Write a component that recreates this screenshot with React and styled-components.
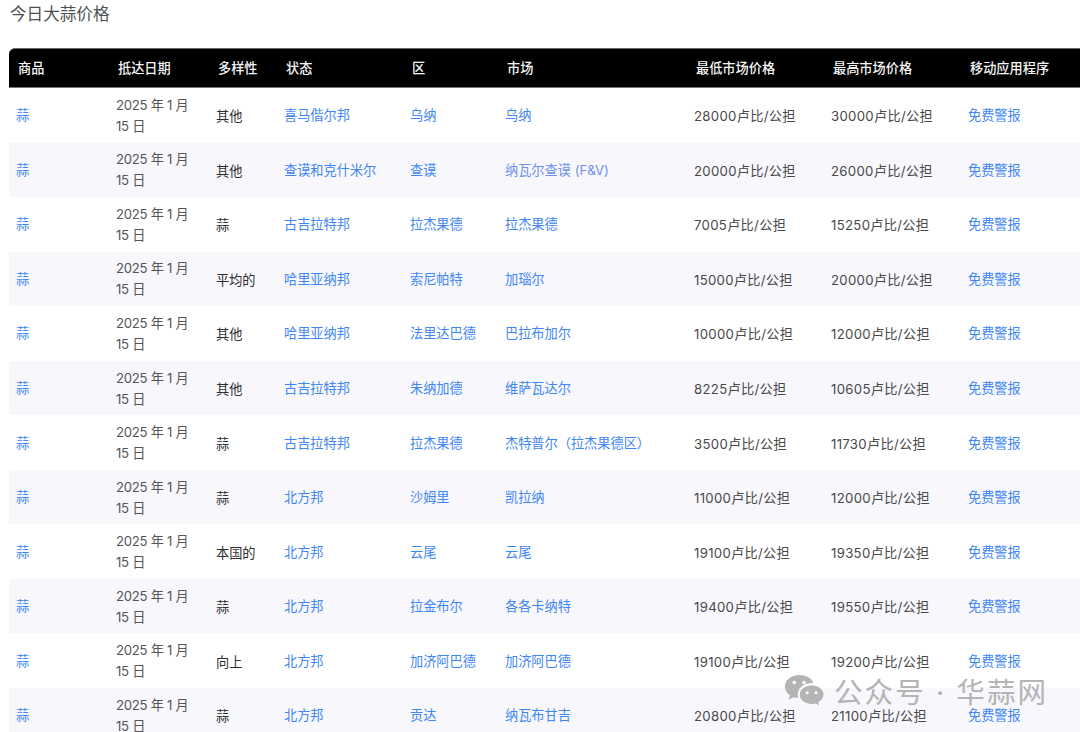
import React from "react";
import styled, { createGlobalStyle } from "styled-components";

const GlobalStyle = createGlobalStyle`
  html, body {
    margin: 0;
    height: 100%;
    overflow: hidden;
    background: #fff;
    font-family: Inter, "Noto Sans CJK SC", sans-serif;
  }
`;

const Page = styled.div`
  position: relative;
  width: 1080px;
  height: 732px;
  overflow: hidden;
  padding-left: 9px;
  box-sizing: border-box;
`;

const Title = styled.h2`
  margin: 0;
  padding: 3px 0 0 1px;
  height: 48px;
  box-sizing: border-box;
  font-size: 16.6px;
  line-height: 22px;
  font-weight: 400;
  color: #4f4f4f;
`;

const Table = styled.table`
  width: 1077px;
  table-layout: fixed;
  border-collapse: separate;
  border-spacing: 0;
  font-size: 13.2px;
`;

const HeadRow = styled.tr`
  height: 40px;
`;

const Th = styled.th`
  background: #000;
  color: #f5f5f5;
  font-weight: 500;
  font-size: 13.2px;
  text-align: left;
  padding: 0 0 2px 9px;
  border-top: 1px solid #666;
  border-bottom: 1px solid #777;
  box-sizing: border-box;
  &:first-child {
    border-top-left-radius: 6px;
  }
`;

const Row = styled.tr`
  height: 54.55px;
  background: ${(p) => (p.$alt ? "#f7f7fc" : "#fff")};
`;

const Td = styled.td`
  padding: 1px 7px 0;
  box-sizing: border-box;
  line-height: 21px;
  white-space: nowrap;
  color: ${(p) => p.$color || "#4a4a4a"};
`;

const DateText = styled.span`
  display: block;
  width: 80px;
  color: #555;
  white-space: normal;
  letter-spacing: -0.3px;
`;

const Variety = styled.span`
  position: relative;
  top: 1px;
  color: #2e2e2e;
`;

const Price = styled.span`
  position: relative;
  top: 1px;
  color: #484848;
  letter-spacing: 0.3px;
`;

const Watermark = styled.div`
  position: absolute;
  left: 784px;
  top: 670px;
  display: flex;
  align-items: center;
  gap: 9px;
  color: #b4b4b4;
  font-size: 28.5px;
  letter-spacing: 2.1px;
  white-space: nowrap;
`;

const rows = [
  ["其他", "喜马偕尔邦", "乌纳", "乌纳", "28000", "30000"],
  ["其他", "查谟和克什米尔", "查谟", "纳瓦尔查谟 (F&V)", "20000", "26000"],
  ["蒜", "古吉拉特邦", "拉杰果德", "拉杰果德", "7005", "15250"],
  ["平均的", "哈里亚纳邦", "索尼帕特", "加瑙尔", "15000", "20000"],
  ["其他", "哈里亚纳邦", "法里达巴德", "巴拉布加尔", "10000", "12000"],
  ["其他", "古吉拉特邦", "朱纳加德", "维萨瓦达尔", "8225", "10605"],
  ["蒜", "古吉拉特邦", "拉杰果德", "杰特普尔（拉杰果德区）", "3500", "11730"],
  ["蒜", "北方邦", "沙姆里", "凯拉纳", "11000", "12000"],
  ["本国的", "北方邦", "云尾", "云尾", "19100", "19350"],
  ["蒜", "北方邦", "拉金布尔", "各各卡纳特", "19400", "19550"],
  ["向上", "北方邦", "加济阿巴德", "加济阿巴德", "19100", "19200"],
  ["蒜", "北方邦", "贡达", "纳瓦布甘吉", "20800", "21100"],
];

const heads = ["商品", "抵达日期", "多样性", "状态", "区", "市场", "最低市场价格", "最高市场价格", "移动应用程序"];
const widths = [100, 100, 68, 126, 95, 189, 137, 137, 125];
const LINK = "#3f86f5";

function WeChatIcon() {
  return (
    <svg width="41" height="33" viewBox="0 0 46 37" fill="#b4b4b4">
      <path d="M17 1C8 1 1 6.800 1 14c0 4 2.200 7.500 5.700 9.900L5 29l6-3c1.600.5 3.300.8 5 .9-.4-1.200-.6-2.400-.6-3.700C15.400 15.700 22.500 10 31.300 10c.6 0 1.100 0 1.700.1C31.300 4.800 24.800 1 17 1z" />
      <path d="M31 12c-7.800 0-14 5-14 11.200S23.200 34.400 31 34.400c1.500 0 3-.2 4.400-.6l5 2.600-1.300-4.400c3.500-2.100 5.900-5.300 5.900-8.800C45 17 38.800 12 31 12z" stroke="#fff" strokeWidth="1.200" />
      <circle cx="11.500" cy="9.500" r="2" fill="#fff" />
      <circle cx="22.500" cy="9.500" r="2" fill="#fff" />
      <circle cx="26" cy="21" r="1.700" fill="#fff" />
      <circle cx="36" cy="21" r="1.700" fill="#fff" />
    </svg>
  );
}

export default function App() {
  return (
    <Page>
      <GlobalStyle />
      <Title>今日大蒜价格</Title>
      <Table>
        <colgroup>
          {widths.map((w, i) => (
            <col key={i} style={{ width: w }} />
          ))}
        </colgroup>
        <thead>
          <HeadRow>
            {heads.map((h) => (
              <Th key={h}>{h}</Th>
            ))}
          </HeadRow>
        </thead>
        <tbody>
          {rows.map((r, i) => (
            <Row key={i} $alt={i % 2 === 1}>
              <Td $color={LINK}>蒜</Td>
              <Td>
                <DateText>2025 年 1 月 15 日</DateText>
              </Td>
              <Td>
                <Variety>{r[0]}</Variety>
              </Td>
              <Td $color={LINK}>{r[1]}</Td>
              <Td $color={LINK}>{r[2]}</Td>
              <Td $color={i === 1 ? "#6f8fee" : LINK}>{r[3]}</Td>
              <Td>
                <Price>{r[4]}卢比/公担</Price>
              </Td>
              <Td>
                <Price>{r[5]}卢比/公担</Price>
              </Td>
              <Td $color={LINK}>免费警报</Td>
            </Row>
          ))}
        </tbody>
      </Table>
      <Watermark>
        <WeChatIcon />
        公众号 · 华蒜网
      </Watermark>
    </Page>
  );
}
